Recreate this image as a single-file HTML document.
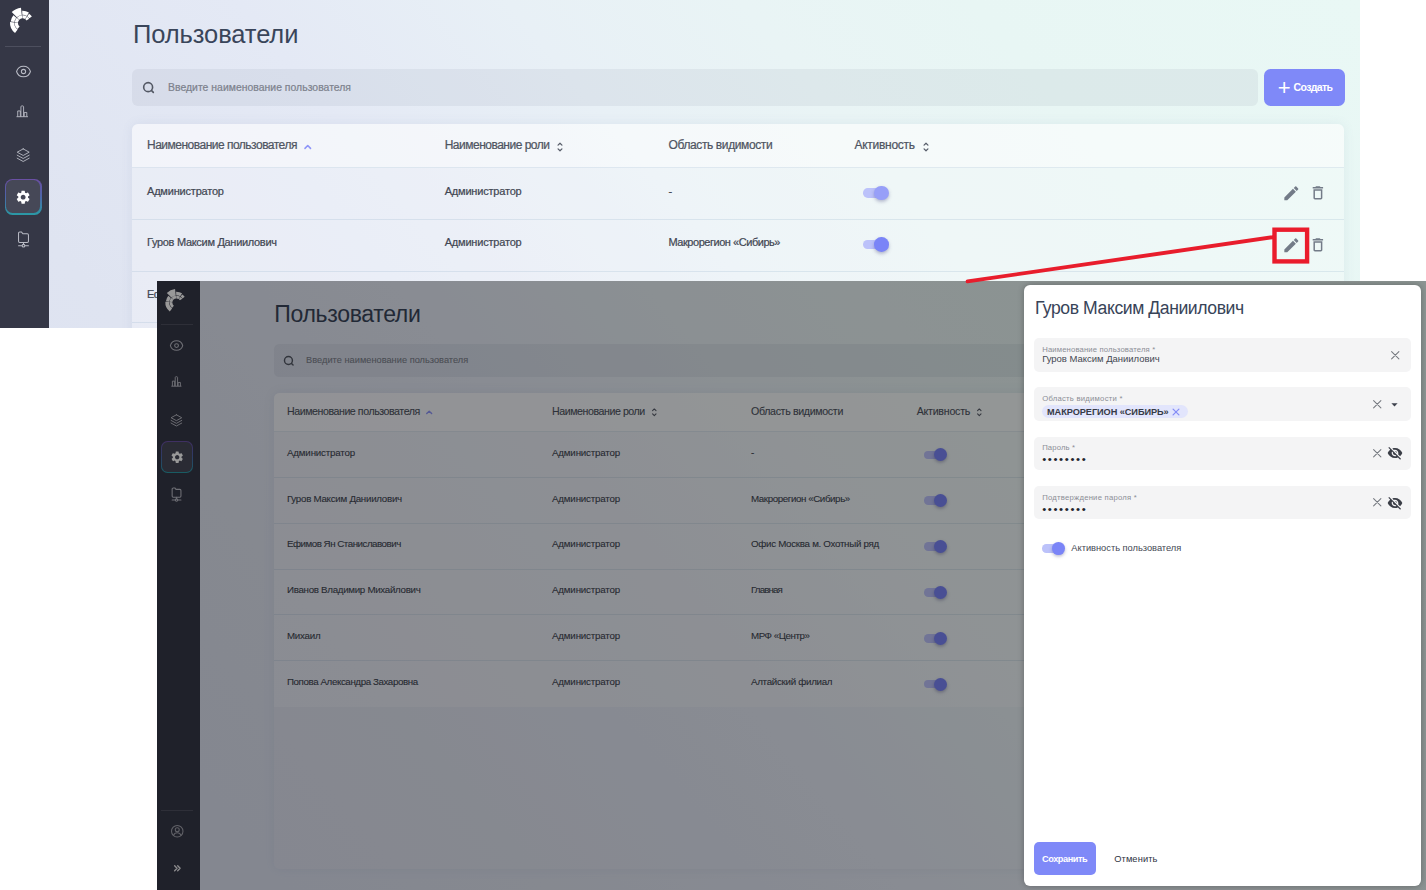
<!DOCTYPE html>
<html lang="ru"><head><meta charset="utf-8"><title>Пользователи</title>
<style>
html,body{margin:0;padding:0}
body{width:1426px;height:890px;position:relative;overflow:hidden;background:#fff;font-family:"Liberation Sans",sans-serif}
.b{position:absolute;box-sizing:border-box}
.i{position:absolute;display:block;overflow:visible}
.t{position:absolute;white-space:nowrap;display:block}
.k{-webkit-text-stroke:.22px currentColor}
.k2{-webkit-text-stroke:.1px currentColor}
.scr{position:absolute;overflow:hidden}
</style></head>
<body>
<div class="scr" style="left:0;top:0;width:1360px;height:328px;background:linear-gradient(50deg,#dce1f1 0%,#dfe4f1 22%,#e4e9f5 42%,#e8f0f6 56%,#e9f4f5 68%,#e8f6f4 80%,#e9f8f5 100%) 0 0/1360px 690px no-repeat">
<div class="b" style="left:0px;top:-3px;width:49.2px;height:334px;background:#353746;border-radius:0px;"></div>
<svg class="i" style="left:4.0px;top:2.0px" width="36.0" height="36.0" viewBox="0 0 36 36"><path fill="#ffffff" d="M11.02 31.06A12.6 12.6 0 0 1 6.03 20.12L10.37 20.42A8.25 8.25 0 0 0 13.64 27.59ZM6.69 19.54A12.0 12.0 0 0 1 9.41 13.29L12.28 15.70A8.25 8.25 0 0 0 10.41 19.99ZM7.71 10.11A15.4 15.4 0 0 1 16.99 5.68L17.75 12.94A8.1 8.1 0 0 0 12.87 15.27ZM18.17 8.71A12.3 12.3 0 0 1 24.93 10.46L22.85 13.93A8.25 8.25 0 0 0 18.31 12.76ZM25.08 11.74A11.3 11.3 0 0 1 27.86 14.52L25.36 16.27A8.25 8.25 0 0 0 23.33 14.24ZM13.55 27.01A7.85 7.85 0 0 1 10.77 20.45L13.96 20.68A4.65 4.65 0 0 0 15.61 24.56ZM10.81 20.04A7.85 7.85 0 0 1 12.77 15.75L15.14 17.89A4.65 4.65 0 0 0 13.98 20.43ZM13.12 15.52A7.75 7.75 0 0 1 17.92 13.28L18.19 16.37A4.65 4.65 0 0 0 15.31 17.71ZM18.33 13.15A7.85 7.85 0 0 1 22.76 14.34L21.06 17.06A4.65 4.65 0 0 0 18.44 16.35ZM23.10 14.57A7.85 7.85 0 0 1 25.18 16.72L22.50 18.47A4.65 4.65 0 0 0 21.27 17.19Z"/></svg>
<div class="b" style="left:5.0px;top:46.2px;width:36.0px;height:1px;background:#4d4f5e;border-radius:0px;"></div>
<svg class="i" style="left:14.50px;top:62.70px" width="17.0" height="17.0" viewBox="0 0 24 24" ><g fill="none" stroke="#b9bbc5" stroke-width="1.45"><path d="M2.200 12C3.600 7.200 7.500 4.500 12 4.500s8.400 2.700 9.800 7.500c-1.400 4.800-5.300 7.500-9.800 7.500S3.600 16.800 2.200 12z"/><circle cx="12" cy="12" r="3"/></g></svg>
<svg class="i" style="left:14.95px;top:104.25px" width="14.5" height="14.5" viewBox="0 0 24 24" ><g fill="none" stroke="#b9bbc5" stroke-width="1.5" stroke-linejoin="round"><path d="M2.500 21h19"/><path d="M4.500 21v-9.500h4.300V21M9.800 21V4.600c0-.8.600-1.400 1.400-1.400h1.600c.8 0 1.400.6 1.400 1.400V21M15.200 21v-7h4.300v7"/></g></svg>
<svg class="i" style="left:15.80px;top:147.90px" width="14.4" height="14.4" viewBox="0 0 24 24" ><g fill="none" stroke="#b9bbc5" stroke-width="1.5" stroke-linejoin="round" stroke-linecap="round"><path d="M12 1.500L2 7l10 5.500L22 7 12 1.500z"/><path d="M2 12l10 5.500L22 12"/><path d="M2 17l10 5.500L22 17"/></g></svg>
<div class="b" style="left:4.8px;top:178.8px;width:36.8px;height:35.8px;border-radius:7.5px;background:linear-gradient(180deg,#6b4fa3 0%,#4f62a8 45%,#2a9aa6 100%)"></div>
<div class="b" style="left:6.0px;top:180.0px;width:34.4px;height:33.4px;border-radius:6.5px;background:#464857"></div>
<svg class="i" style="left:14.95px;top:189.25px" width="16.3" height="16.3" viewBox="0 0 24 24" ><path fill="#ffffff" d="M19.140 12.940c.040-.300.060-.610.060-.940 0-.320-.020-.640-.070-.940l2.030-1.580a.49.490 0 0 0 .12-.61l-1.920-3.320a.488.488 0 0 0-.59-.22l-2.390.96c-.5-.38-1.030-.7-1.620-.94l-.36-2.540a.484.484 0 0 0-.48-.41h-3.840c-.24 0-.43.170-.47.410l-.36 2.540c-.59.240-1.130.570-1.620.940l-2.390-.960c-.22-.080-.47 0-.59.220L2.740 8.870c-.12.210-.08.470.12.610l2.030 1.580c-.05.300-.09.630-.09.940s.02.640.07.940l-2.030 1.580a.49.490 0 0 0-.12.610l1.920 3.320c.12.220.37.290.59.220l2.390-.96c.5.380 1.030.7 1.620.94l.36 2.540c.05.240.24.410.48.410h3.840c.24 0 .44-.17.470-.41l.36-2.540c.59-.24 1.130-.56 1.620-.94l2.390.96c.22.080.47 0 .59-.22l1.920-3.320c.12-.22.07-.47-.12-.61l-2.010-1.580zM12 15.600c-1.980 0-3.600-1.620-3.600-3.600s1.620-3.600 3.600-3.600 3.600 1.620 3.600 3.600-1.620 3.600-3.600 3.600z"/></svg>
<svg class="i" style="left:14.50px;top:231.10px" width="17.0" height="17.0" viewBox="0 0 24 24" ><g fill="none" stroke="#b9bbc5" stroke-width="1.45" stroke-linejoin="round" stroke-linecap="round"><path d="M5 14.500V3.200c0-.9.700-1.700 1.700-1.700h2.600l1.800 2.300h6.200c.9 0 1.700.8 1.700 1.700v9c0 .9-.8 1.700-1.700 1.700H6.700c-1 0-1.700-.8-1.700-1.700z"/><path d="M12 16.200v2.600M5 20.800h4.500M14.500 20.800H19"/><circle cx="12" cy="20.800" r="1.900"/></g></svg>
<div class="b" style="left:131.6px;top:69.0px;width:1126.0px;height:37.4px;background:rgba(120,130,150,.10);border-radius:6.0px;"></div>
<svg class="i" style="left:142.20px;top:81.10px" width="13.4" height="13.4" viewBox="0 0 24 24" ><g fill="none" stroke="#535864" stroke-width="2.9" stroke-linecap="round"><circle cx="11" cy="11" r="8"/><path d="M17.200 17.200L20.300 20.300"/></g></svg>
<div class="b" style="left:1263.6px;top:69.0px;width:81.3px;height:37.2px;background:#7f89f8;border-radius:6.5px;"></div>
<div class="b" style="left:131.6px;top:124.3px;width:1212.4px;height:475.7px;background:rgba(255,255,255,.03);border-radius:6.0px;box-shadow:0 0 12px rgba(90,110,150,.09);"></div>
<div class="b" style="left:131.6px;top:124.3px;width:1212.4px;height:250.0px;background:rgba(255,255,255,.27);border-radius:0px;border-radius:6.0px 6.0px 0 0;"></div>
<div class="b" style="left:131.6px;top:124.3px;width:1212.4px;height:43.6px;background:rgba(255,255,255,.42);border-radius:0px;border-radius:6.0px 6.0px 0 0;"></div>
<svg class="i" style="left:302.75px;top:141.95px" width="9.5" height="9.5" viewBox="0 0 24 24" ><path fill="none" stroke="#8e95f8" stroke-width="4" stroke-linecap="round" stroke-linejoin="round" d="M5 16l7-7 7 7"/></svg>
<svg class="i" style="left:554.40px;top:140.50px" width="12.0" height="12.0" viewBox="0 0 24 24" ><path fill="none" stroke="#555b68" stroke-width="2.4" stroke-linecap="round" stroke-linejoin="round" d="M8.100 8.400L12 4.500l3.900 3.900M8.100 15.600L12 19.500l3.900-3.900"/></svg>
<svg class="i" style="left:919.50px;top:140.50px" width="12.0" height="12.0" viewBox="0 0 24 24" ><path fill="none" stroke="#555b68" stroke-width="2.4" stroke-linecap="round" stroke-linejoin="round" d="M8.100 8.400L12 4.500l3.900 3.900M8.100 15.600L12 19.500l3.900-3.900"/></svg>
<div class="b" style="left:131.6px;top:167.4px;width:1212.4px;height:1px;background:rgba(140,175,200,.22);border-radius:0px;"></div>
<div class="b" style="left:863.1px;top:188.3px;width:23.0px;height:9.6px;border-radius:4.8px;background:#bcc2fa"></div><div class="b" style="left:874.1px;top:185.8px;width:14.6px;height:14.6px;border-radius:50%;background:#979ff8;box-shadow:0 1.8px 3.6px rgba(60,60,120,.35)"></div>
<svg class="i" style="left:1281.55px;top:184.05px" width="18.7" height="18.7" viewBox="0 0 24 24" ><path fill="#737b88" d="M3 17.25V21h3.75L17.81 9.94l-3.75-3.75L3 17.25zM20.71 7.04a.996.996 0 0 0 0-1.41l-2.34-2.34a.996.996 0 0 0-1.41 0l-1.83 1.83 3.75 3.75 1.83-1.83z"/></svg>
<svg class="i" style="left:1309.00px;top:184.40px" width="17.8" height="17.8" viewBox="0 0 24 24" ><path fill="#737b88" d="M6 19c0 1.1.9 2 2 2h8c1.1 0 2-.9 2-2V7H6v12zM8 9h8v10H8V9zm7.5-5l-1-1h-5l-1 1H5v2h14V4h-3.5z"/></svg>
<div class="b" style="left:131.6px;top:219.0px;width:1212.4px;height:1px;background:rgba(140,175,200,.22);border-radius:0px;"></div>
<div class="b" style="left:863.1px;top:239.9px;width:23.0px;height:9.6px;border-radius:4.8px;background:#bcc2fa"></div><div class="b" style="left:874.1px;top:237.4px;width:14.6px;height:14.6px;border-radius:50%;background:#7a84f7;box-shadow:0 1.8px 3.6px rgba(60,60,120,.35)"></div>
<svg class="i" style="left:1281.55px;top:235.65px" width="18.7" height="18.7" viewBox="0 0 24 24" ><path fill="#737b88" d="M3 17.25V21h3.75L17.81 9.94l-3.75-3.75L3 17.25zM20.71 7.04a.996.996 0 0 0 0-1.41l-2.34-2.34a.996.996 0 0 0-1.41 0l-1.83 1.83 3.75 3.75 1.83-1.83z"/></svg>
<svg class="i" style="left:1309.00px;top:236.00px" width="17.8" height="17.8" viewBox="0 0 24 24" ><path fill="#737b88" d="M6 19c0 1.1.9 2 2 2h8c1.1 0 2-.9 2-2V7H6v12zM8 9h8v10H8V9zm7.5-5l-1-1h-5l-1 1H5v2h14V4h-3.5z"/></svg>
<div class="b" style="left:131.6px;top:270.6px;width:1212.4px;height:1px;background:rgba(140,175,200,.22);border-radius:0px;"></div>
<div class="b" style="left:863.1px;top:291.5px;width:23.0px;height:9.6px;border-radius:4.8px;background:#bcc2fa"></div><div class="b" style="left:874.1px;top:289.0px;width:14.6px;height:14.6px;border-radius:50%;background:#7a84f7;box-shadow:0 1.8px 3.6px rgba(60,60,120,.35)"></div>
<svg class="i" style="left:1281.55px;top:287.25px" width="18.7" height="18.7" viewBox="0 0 24 24" ><path fill="#737b88" d="M3 17.25V21h3.75L17.81 9.94l-3.75-3.75L3 17.25zM20.71 7.04a.996.996 0 0 0 0-1.41l-2.34-2.34a.996.996 0 0 0-1.41 0l-1.83 1.83 3.75 3.75 1.83-1.83z"/></svg>
<svg class="i" style="left:1309.00px;top:287.60px" width="17.8" height="17.8" viewBox="0 0 24 24" ><path fill="#737b88" d="M6 19c0 1.1.9 2 2 2h8c1.1 0 2-.9 2-2V7H6v12zM8 9h8v10H8V9zm7.5-5l-1-1h-5l-1 1H5v2h14V4h-3.5z"/></svg>
<div class="b" style="left:131.6px;top:322.2px;width:1212.4px;height:1px;background:rgba(140,175,200,.22);border-radius:0px;"></div>
<div class="b" style="left:863.1px;top:343.1px;width:23.0px;height:9.6px;border-radius:4.8px;background:#bcc2fa"></div><div class="b" style="left:874.1px;top:340.6px;width:14.6px;height:14.6px;border-radius:50%;background:#7a84f7;box-shadow:0 1.8px 3.6px rgba(60,60,120,.35)"></div>
<svg class="i" style="left:1281.55px;top:338.85px" width="18.7" height="18.7" viewBox="0 0 24 24" ><path fill="#737b88" d="M3 17.25V21h3.75L17.81 9.94l-3.75-3.75L3 17.25zM20.71 7.04a.996.996 0 0 0 0-1.41l-2.34-2.34a.996.996 0 0 0-1.41 0l-1.83 1.83 3.75 3.75 1.83-1.83z"/></svg>
<svg class="i" style="left:1309.00px;top:339.20px" width="17.8" height="17.8" viewBox="0 0 24 24" ><path fill="#737b88" d="M6 19c0 1.1.9 2 2 2h8c1.1 0 2-.9 2-2V7H6v12zM8 9h8v10H8V9zm7.5-5l-1-1h-5l-1 1H5v2h14V4h-3.5z"/></svg>
<span class="t" style="left:133.0px;top:19.4px;font-size:25.5px;line-height:31px;color:#39455a;letter-spacing:-0.094px;">Пользователи</span>
<span class="t k" style="left:168.0px;top:81.1px;font-size:10.4px;line-height:13px;color:#7d828d;letter-spacing:0.031px;">Введите наименование пользователя</span>
<span class="t" style="left:1277.7px;top:73.6px;font-size:22.0px;line-height:27px;color:#ffffff;">+</span>
<span class="t" style="left:1293.5px;top:81.1px;font-size:10.5px;line-height:13px;color:#ffffff;font-weight:700;letter-spacing:-0.615px;">Создать</span>
<span class="t k" style="left:147.0px;top:138.2px;font-size:12.0px;line-height:15px;color:#4e5461;letter-spacing:-0.505px;">Наименование пользователя</span>
<span class="t k" style="left:444.7px;top:138.2px;font-size:12.0px;line-height:15px;color:#4e5461;letter-spacing:-0.501px;">Наименование роли</span>
<span class="t k" style="left:668.5px;top:138.2px;font-size:12.0px;line-height:15px;color:#4e5461;letter-spacing:-0.384px;">Область видимости</span>
<span class="t k" style="left:854.5px;top:138.2px;font-size:12.0px;line-height:15px;color:#4e5461;letter-spacing:-0.280px;">Активность</span>
<span class="t k" style="left:147.0px;top:183.6px;font-size:11.0px;line-height:14px;color:#424753;letter-spacing:-0.198px;">Администратор</span>
<span class="t k" style="left:444.7px;top:183.6px;font-size:11.0px;line-height:14px;color:#424753;letter-spacing:-0.198px;">Администратор</span>
<span class="t k" style="left:668.5px;top:183.6px;font-size:11.0px;line-height:14px;color:#424753;">-</span>
<span class="t k" style="left:147.0px;top:235.2px;font-size:11.0px;line-height:14px;color:#424753;letter-spacing:-0.303px;">Гуров Максим Даниилович</span>
<span class="t k" style="left:444.7px;top:235.2px;font-size:11.0px;line-height:14px;color:#424753;letter-spacing:-0.198px;">Администратор</span>
<span class="t k" style="left:668.5px;top:235.2px;font-size:11.0px;line-height:14px;color:#424753;letter-spacing:-0.459px;">Макрорегион &laquo;Сибирь&raquo;</span>
<span class="t k" style="left:147.0px;top:286.8px;font-size:11.0px;line-height:14px;color:#424753;letter-spacing:-0.545px;">Ефимов Ян Станиславович</span>
<span class="t k" style="left:444.7px;top:286.8px;font-size:11.0px;line-height:14px;color:#424753;letter-spacing:-0.198px;">Администратор</span>
<span class="t k" style="left:668.5px;top:286.8px;font-size:11.0px;line-height:14px;color:#424753;letter-spacing:-0.327px;">Офис Москва м. Охотный ряд</span>
<span class="t k" style="left:147.0px;top:338.4px;font-size:11.0px;line-height:14px;color:#424753;letter-spacing:-0.339px;">Иванов Владимир Михайлович</span>
<span class="t k" style="left:444.7px;top:338.4px;font-size:11.0px;line-height:14px;color:#424753;letter-spacing:-0.198px;">Администратор</span>
<span class="t k" style="left:668.5px;top:338.4px;font-size:11.0px;line-height:14px;color:#424753;letter-spacing:-0.979px;">Главная</span>
</div>
<div class="scr" style="left:156.5px;top:281.2px;width:1269.5px;height:608.8px;background:linear-gradient(50deg,#dce1f1 0%,#dfe4f1 22%,#e4e9f5 42%,#e8f0f6 56%,#e9f4f5 68%,#e8f6f4 80%,#e9f8f5 100%)">
<div class="b" style="left:0;top:1.5px;width:100%;height:100%">
<div class="b" style="left:0px;top:-3px;width:43.6px;height:614px;background:#353746;border-radius:0px;"></div>
<svg class="i" style="left:3.5px;top:1.8px" width="31.9" height="31.9" viewBox="0 0 36 36"><path fill="#ffffff" d="M11.02 31.06A12.6 12.6 0 0 1 6.03 20.12L10.37 20.42A8.25 8.25 0 0 0 13.64 27.59ZM6.69 19.54A12.0 12.0 0 0 1 9.41 13.29L12.28 15.70A8.25 8.25 0 0 0 10.41 19.99ZM7.71 10.11A15.4 15.4 0 0 1 16.99 5.68L17.75 12.94A8.1 8.1 0 0 0 12.87 15.27ZM18.17 8.71A12.3 12.3 0 0 1 24.93 10.46L22.85 13.93A8.25 8.25 0 0 0 18.31 12.76ZM25.08 11.74A11.3 11.3 0 0 1 27.86 14.52L25.36 16.27A8.25 8.25 0 0 0 23.33 14.24ZM13.55 27.01A7.85 7.85 0 0 1 10.77 20.45L13.96 20.68A4.65 4.65 0 0 0 15.61 24.56ZM10.81 20.04A7.85 7.85 0 0 1 12.77 15.75L15.14 17.89A4.65 4.65 0 0 0 13.98 20.43ZM13.12 15.52A7.75 7.75 0 0 1 17.92 13.28L18.19 16.37A4.65 4.65 0 0 0 15.31 17.71ZM18.33 13.15A7.85 7.85 0 0 1 22.76 14.34L21.06 17.06A4.65 4.65 0 0 0 18.44 16.35ZM23.10 14.57A7.85 7.85 0 0 1 25.18 16.72L22.50 18.47A4.65 4.65 0 0 0 21.27 17.19Z"/></svg>
<div class="b" style="left:4.4px;top:40.9px;width:31.9px;height:1px;background:#4d4f5e;border-radius:0px;"></div>
<svg class="i" style="left:12.83px;top:55.53px" width="15.1" height="15.1" viewBox="0 0 24 24" ><g fill="none" stroke="#b9bbc5" stroke-width="1.6970872230702376"><path d="M2.200 12C3.600 7.200 7.500 4.500 12 4.500s8.400 2.700 9.800 7.500c-1.400 4.800-5.300 7.500-9.800 7.500S3.600 16.800 2.200 12z"/><circle cx="12" cy="12" r="3"/></g></svg>
<svg class="i" style="left:13.27px;top:92.39px" width="12.8" height="12.8" viewBox="0 0 24 24" ><g fill="none" stroke="#b9bbc5" stroke-width="1.755607472141625" stroke-linejoin="round"><path d="M2.500 21h19"/><path d="M4.500 21v-9.500h4.300V21M9.800 21V4.600c0-.8.600-1.400 1.400-1.400h1.600c.8 0 1.400.6 1.400 1.400V21M15.200 21v-7h4.300v7"/></g></svg>
<svg class="i" style="left:13.98px;top:131.02px" width="12.8" height="12.8" viewBox="0 0 24 24" ><g fill="none" stroke="#b9bbc5" stroke-width="1.755607472141625" stroke-linejoin="round" stroke-linecap="round"><path d="M12 1.500L2 7l10 5.500L22 7 12 1.500z"/><path d="M2 12l10 5.500L22 12"/><path d="M2 17l10 5.500L22 17"/></g></svg>
<div class="b" style="left:4.3px;top:158.4px;width:32.6px;height:31.7px;border-radius:6.6px;background:linear-gradient(180deg,#6b4fa3 0%,#4f62a8 45%,#2a9aa6 100%)"></div>
<div class="b" style="left:5.5px;top:159.6px;width:30.2px;height:29.3px;border-radius:5.8px;background:#464857"></div>
<svg class="i" style="left:13.27px;top:167.70px" width="14.4" height="14.4" viewBox="0 0 24 24" ><path fill="#ffffff" d="M19.140 12.940c.040-.300.060-.610.060-.940 0-.320-.020-.640-.070-.940l2.030-1.580a.49.490 0 0 0 .12-.61l-1.920-3.320a.488.488 0 0 0-.59-.22l-2.390.96c-.5-.38-1.030-.7-1.620-.94l-.36-2.540a.484.484 0 0 0-.48-.41h-3.840c-.24 0-.43.170-.47.410l-.36 2.540c-.59.240-1.130.570-1.620.940l-2.390-.960c-.22-.080-.47 0-.59.220L2.740 8.870c-.12.210-.08.470.12.610l2.030 1.580c-.05.300-.09.630-.09.940s.02.640.07.940l-2.030 1.580a.49.490 0 0 0-.12.610l1.920 3.320c.12.220.37.290.59.220l2.390-.96c.5.380 1.030.7 1.620.94l.36 2.540c.05.240.24.410.48.410h3.840c.24 0 .44-.17.470-.41l.36-2.540c.59-.24 1.130-.56 1.620-.94l2.390.96c.22.080.47 0 .59-.22l1.920-3.320c.12-.22.07-.47-.12-.61l-2.010-1.580zM12 15.600c-1.980 0-3.600-1.620-3.600-3.600s1.620-3.600 3.600-3.600 3.600 1.620 3.600 3.600-1.620 3.600-3.600 3.600z"/></svg>
<svg class="i" style="left:12.83px;top:204.74px" width="15.1" height="15.1" viewBox="0 0 24 24" ><g fill="none" stroke="#b9bbc5" stroke-width="1.6970872230702376" stroke-linejoin="round" stroke-linecap="round"><path d="M5 14.500V3.200c0-.9.700-1.700 1.700-1.700h2.600l1.800 2.300h6.200c.9 0 1.700.8 1.700 1.700v9c0 .9-.8 1.700-1.700 1.700H6.700c-1 0-1.700-.8-1.700-1.700z"/><path d="M12 16.200v2.600M5 20.800h4.500M14.500 20.800H19"/><circle cx="12" cy="20.800" r="1.900"/></g></svg>
<div class="b" style="left:4.4px;top:527px;width:31.9px;height:1px;background:#4d4f5e;border-radius:0px;"></div>
<svg class="i" style="left:13.15px;top:541.35px" width="14.5" height="14.5" viewBox="0 0 24 24" ><g fill="none" stroke="#a2a4ae" stroke-width="1.7"><circle cx="12" cy="12" r="9.500"/><circle cx="12" cy="9.500" r="3.300"/><path d="M5.800 19c1-3 3.300-4.500 6.200-4.500s5.200 1.500 6.200 4.500"/></g></svg>
<svg class="i" style="left:15.35px;top:580.25px" width="10.5" height="10.5" viewBox="0 0 24 24" ><path fill="none" stroke="#e6e6ea" stroke-width="3.2" stroke-linecap="round" stroke-linejoin="round" d="M6 6.500L11.500 12 6 17.500M13 6.500L18.500 12 13 17.500"/></svg>
<div class="b" style="left:117.4px;top:61.1px;width:997.6px;height:33.1px;background:rgba(120,130,150,.10);border-radius:5.3px;"></div>
<svg class="i" style="left:126.78px;top:71.84px" width="11.9" height="11.9" viewBox="0 0 24 24" ><g fill="none" stroke="#535864" stroke-width="2.9" stroke-linecap="round"><circle cx="11" cy="11" r="8"/><path d="M17.200 17.200L20.300 20.300"/></g></svg>
<div class="b" style="left:117.4px;top:110.1px;width:1100px;height:476.2px;background:rgba(255,255,255,.03);border-radius:5.3px;box-shadow:0 0 12px rgba(90,110,150,.09);"></div>
<div class="b" style="left:117.4px;top:110.1px;width:1100px;height:313.9px;background:rgba(255,255,255,.27);border-radius:0px;border-radius:5.3px 5.3px 0 0;"></div>
<div class="b" style="left:117.4px;top:110.1px;width:1100px;height:38.8px;background:rgba(255,255,255,.42);border-radius:0px;border-radius:5.3px 5.3px 0 0;"></div>
<svg class="i" style="left:268.50px;top:125.57px" width="8.4" height="8.4" viewBox="0 0 24 24" ><path fill="none" stroke="#8e95f8" stroke-width="4" stroke-linecap="round" stroke-linejoin="round" d="M5 16l7-7 7 7"/></svg>
<svg class="i" style="left:492.71px;top:124.29px" width="10.6" height="10.6" viewBox="0 0 24 24" ><path fill="none" stroke="#555b68" stroke-width="2.4" stroke-linecap="round" stroke-linejoin="round" d="M8.100 8.400L12 4.500l3.900 3.900M8.100 15.600L12 19.500l3.900-3.900"/></svg>
<svg class="i" style="left:817.81px;top:124.29px" width="10.6" height="10.6" viewBox="0 0 24 24" ><path fill="none" stroke="#555b68" stroke-width="2.4" stroke-linecap="round" stroke-linejoin="round" d="M8.100 8.400L12 4.500l3.900 3.900M8.100 15.600L12 19.500l3.900-3.900"/></svg>
<div class="b" style="left:117.4px;top:148.4px;width:1100px;height:1px;background:rgba(140,175,200,.22);border-radius:0px;"></div>
<div class="b" style="left:767.8px;top:168.0px;width:20.4px;height:8.5px;border-radius:4.25px;background:#bcc2fa"></div><div class="b" style="left:777.6px;top:165.8px;width:12.935599999999999px;height:12.935599999999999px;border-radius:50%;background:#7a84f7;box-shadow:0 1.6px 3.2px rgba(60,60,120,.35)"></div>
<div class="b" style="left:117.4px;top:194.2px;width:1100px;height:1px;background:rgba(140,175,200,.22);border-radius:0px;"></div>
<div class="b" style="left:767.8px;top:213.8px;width:20.4px;height:8.5px;border-radius:4.25px;background:#bcc2fa"></div><div class="b" style="left:777.6px;top:211.6px;width:12.935599999999999px;height:12.935599999999999px;border-radius:50%;background:#7a84f7;box-shadow:0 1.6px 3.2px rgba(60,60,120,.35)"></div>
<div class="b" style="left:117.4px;top:240.1px;width:1100px;height:1px;background:rgba(140,175,200,.22);border-radius:0px;"></div>
<div class="b" style="left:767.8px;top:259.7px;width:20.4px;height:8.5px;border-radius:4.25px;background:#bcc2fa"></div><div class="b" style="left:777.6px;top:257.5px;width:12.935599999999999px;height:12.935599999999999px;border-radius:50%;background:#7a84f7;box-shadow:0 1.6px 3.2px rgba(60,60,120,.35)"></div>
<div class="b" style="left:117.4px;top:286.0px;width:1100px;height:1px;background:rgba(140,175,200,.22);border-radius:0px;"></div>
<div class="b" style="left:767.8px;top:305.6px;width:20.4px;height:8.5px;border-radius:4.25px;background:#bcc2fa"></div><div class="b" style="left:777.6px;top:303.4px;width:12.935599999999999px;height:12.935599999999999px;border-radius:50%;background:#7a84f7;box-shadow:0 1.6px 3.2px rgba(60,60,120,.35)"></div>
<div class="b" style="left:117.4px;top:331.8px;width:1100px;height:1px;background:rgba(140,175,200,.22);border-radius:0px;"></div>
<div class="b" style="left:767.8px;top:351.4px;width:20.4px;height:8.5px;border-radius:4.25px;background:#bcc2fa"></div><div class="b" style="left:777.6px;top:349.2px;width:12.935599999999999px;height:12.935599999999999px;border-radius:50%;background:#7a84f7;box-shadow:0 1.6px 3.2px rgba(60,60,120,.35)"></div>
<div class="b" style="left:117.4px;top:377.7px;width:1100px;height:1px;background:rgba(140,175,200,.22);border-radius:0px;"></div>
<div class="b" style="left:767.8px;top:397.3px;width:20.4px;height:8.5px;border-radius:4.25px;background:#bcc2fa"></div><div class="b" style="left:777.6px;top:395.1px;width:12.935599999999999px;height:12.935599999999999px;border-radius:50%;background:#7a84f7;box-shadow:0 1.6px 3.2px rgba(60,60,120,.35)"></div>
<span class="t" style="left:117.8px;top:17.0px;font-size:23.04px;line-height:28px;color:#39455a;letter-spacing:-0.344px;">Пользователи</span>
<span class="t k2" style="left:149.6px;top:71.6px;font-size:9.21px;line-height:12px;color:#7d828d;letter-spacing:0.029px;">Введите наименование пользователя</span>
<span class="t k2" style="left:130.5px;top:122.4px;font-size:10.63px;line-height:13px;color:#4e5461;letter-spacing:-0.443px;">Наименование пользователя</span>
<span class="t k2" style="left:395.5px;top:122.4px;font-size:10.63px;line-height:13px;color:#4e5461;letter-spacing:-0.440px;">Наименование роли</span>
<span class="t k2" style="left:594.5px;top:122.4px;font-size:10.63px;line-height:13px;color:#4e5461;letter-spacing:-0.336px;">Область видимости</span>
<span class="t k2" style="left:760.2px;top:122.4px;font-size:10.63px;line-height:13px;color:#4e5461;letter-spacing:-0.244px;">Активность</span>
<span class="t k2" style="left:130.5px;top:164.0px;font-size:9.75px;line-height:12px;color:#424753;letter-spacing:-0.178px;">Администратор</span>
<span class="t k2" style="left:395.5px;top:164.0px;font-size:9.75px;line-height:12px;color:#424753;letter-spacing:-0.178px;">Администратор</span>
<span class="t k2" style="left:594.5px;top:164.0px;font-size:9.75px;line-height:12px;color:#424753;">-</span>
<span class="t k2" style="left:130.5px;top:209.9px;font-size:9.75px;line-height:12px;color:#424753;letter-spacing:-0.270px;">Гуров Максим Даниилович</span>
<span class="t k2" style="left:395.5px;top:209.9px;font-size:9.75px;line-height:12px;color:#424753;letter-spacing:-0.178px;">Администратор</span>
<span class="t k2" style="left:594.5px;top:209.9px;font-size:9.75px;line-height:12px;color:#424753;letter-spacing:-0.409px;">Макрорегион &laquo;Сибирь&raquo;</span>
<span class="t k2" style="left:130.5px;top:255.7px;font-size:9.75px;line-height:12px;color:#424753;letter-spacing:-0.485px;">Ефимов Ян Станиславович</span>
<span class="t k2" style="left:395.5px;top:255.7px;font-size:9.75px;line-height:12px;color:#424753;letter-spacing:-0.178px;">Администратор</span>
<span class="t k2" style="left:594.5px;top:255.7px;font-size:9.75px;line-height:12px;color:#424753;letter-spacing:-0.292px;">Офис Москва м. Охотный ряд</span>
<span class="t k2" style="left:130.5px;top:301.6px;font-size:9.75px;line-height:12px;color:#424753;letter-spacing:-0.303px;">Иванов Владимир Михайлович</span>
<span class="t k2" style="left:395.5px;top:301.6px;font-size:9.75px;line-height:12px;color:#424753;letter-spacing:-0.178px;">Администратор</span>
<span class="t k2" style="left:594.5px;top:301.6px;font-size:9.75px;line-height:12px;color:#424753;letter-spacing:-0.871px;">Главная</span>
<span class="t k2" style="left:130.5px;top:347.5px;font-size:9.75px;line-height:12px;color:#424753;letter-spacing:-0.248px;">Михаил</span>
<span class="t k2" style="left:395.5px;top:347.5px;font-size:9.75px;line-height:12px;color:#424753;letter-spacing:-0.178px;">Администратор</span>
<span class="t k2" style="left:594.5px;top:347.5px;font-size:9.75px;line-height:12px;color:#424753;letter-spacing:-0.447px;">МРФ &laquo;Центр&raquo;</span>
<span class="t k2" style="left:130.5px;top:393.3px;font-size:9.75px;line-height:12px;color:#424753;letter-spacing:-0.403px;">Попова Александра Захаровна</span>
<span class="t k2" style="left:395.5px;top:393.3px;font-size:9.75px;line-height:12px;color:#424753;letter-spacing:-0.178px;">Администратор</span>
<span class="t k2" style="left:594.5px;top:393.3px;font-size:9.75px;line-height:12px;color:#424753;letter-spacing:-0.291px;">Алтайский филиал</span>
</div>
<div class="b" style="left:0;top:0;width:100%;height:100%;background:rgba(0,0,0,.4)"></div>
<div class="b" style="left:867.1px;top:3.4px;width:397.6px;height:601.6px;background:#fff;border-radius:6px;box-shadow:0 0 6px rgba(0,0,0,.28)"></div>
<div class="b" style="left:877.5px;top:57.2px;width:377px;height:33.2px;background:#f4f4f5;border-radius:5px;"></div>
<div class="b" style="left:877.5px;top:106.2px;width:377px;height:33.2px;background:#f4f4f5;border-radius:5px;"></div>
<div class="b" style="left:877.5px;top:155.6px;width:377px;height:33.2px;background:#f4f4f5;border-radius:5px;"></div>
<div class="b" style="left:877.5px;top:204.8px;width:377px;height:33.2px;background:#f4f4f5;border-radius:5px;"></div>
<svg class="i" style="left:1232.15px;top:67.35px" width="12.5" height="12.5" viewBox="0 0 24 24" ><path fill="none" stroke="#74787f" stroke-width="2.0" stroke-linecap="round" d="M5 5l14 14M19 5L5 19"/></svg>
<div class="b" style="left:885.4px;top:124.0px;width:146.6px;height:13px;background:#e2e5fc;border-radius:6.5px;"></div>
<svg class="i" style="left:1014.40px;top:125.60px" width="10" height="10" viewBox="0 0 24 24" ><path fill="none" stroke="#858df6" stroke-width="3" stroke-linecap="round" d="M5 5l14 14M19 5L5 19"/></svg>
<svg class="i" style="left:1214.65px;top:116.75px" width="12.5" height="12.5" viewBox="0 0 24 24" ><path fill="none" stroke="#74787f" stroke-width="2.0" stroke-linecap="round" d="M5 5l14 14M19 5L5 19"/></svg>
<svg class="i" style="left:1230.90px;top:116.10px" width="15" height="15" viewBox="0 0 24 24" ><path fill="#3d414c" d="M7 10l5 5 5-5z"/></svg>
<svg class="i" style="left:1214.65px;top:166.05px" width="12.5" height="12.5" viewBox="0 0 24 24" ><path fill="none" stroke="#74787f" stroke-width="2.0" stroke-linecap="round" d="M5 5l14 14M19 5L5 19"/></svg>
<svg class="i" style="left:1230.40px;top:164.30px" width="16" height="16" viewBox="0 0 24 24" ><path fill="#3a3d46" d="M12 7c2.760 0 5 2.240 5 5 0 .650-.130 1.260-.360 1.830l2.920 2.920c1.510-1.260 2.700-2.890 3.430-4.750-1.730-4.390-6-7.500-11-7.500-1.400 0-2.740.250-3.980.700l2.160 2.160C10.740 7.130 11.350 7 12 7zM2 4.270l2.280 2.280.46.460A11.804 11.804 0 0 0 1 12c1.730 4.390 6 7.500 11 7.500 1.550 0 3.030-.300 4.380-.840l.42.420L19.730 22 21 20.730 3.270 3 2 4.270zM7.530 9.800l1.550 1.550c-.05.210-.08.430-.08.650 0 1.660 1.340 3 3 3 .22 0 .44-.03.65-.08l1.550 1.550c-.67.330-1.410.530-2.200.530-2.760 0-5-2.240-5-5 0-.790.200-1.530.530-2.200zm4.310-.780l3.150 3.150.02-.16c0-1.660-1.340-3-3-3l-.17.010z"/></svg>
<svg class="i" style="left:1214.65px;top:215.25px" width="12.5" height="12.5" viewBox="0 0 24 24" ><path fill="none" stroke="#74787f" stroke-width="2.0" stroke-linecap="round" d="M5 5l14 14M19 5L5 19"/></svg>
<svg class="i" style="left:1230.40px;top:213.50px" width="16" height="16" viewBox="0 0 24 24" ><path fill="#3a3d46" d="M12 7c2.760 0 5 2.240 5 5 0 .650-.130 1.260-.360 1.830l2.920 2.920c1.510-1.260 2.700-2.890 3.430-4.750-1.730-4.390-6-7.500-11-7.500-1.400 0-2.740.250-3.980.700l2.160 2.160C10.740 7.130 11.350 7 12 7zM2 4.270l2.280 2.280.46.460A11.804 11.804 0 0 0 1 12c1.730 4.390 6 7.500 11 7.500 1.550 0 3.030-.300 4.380-.840l.42.420L19.730 22 21 20.730 3.270 3 2 4.270zM7.530 9.800l1.550 1.550c-.05.210-.08.430-.08.650 0 1.660 1.340 3 3 3 .22 0 .44-.03.65-.08l1.550 1.550c-.67.330-1.410.530-2.200.530-2.760 0-5-2.240-5-5 0-.790.200-1.530.530-2.200zm4.310-.780l3.150 3.150.02-.16c0-1.660-1.340-3-3-3l-.17.010z"/></svg>
<div class="b" style="left:885.3px;top:262.9px;width:21px;height:8.6px;border-radius:4.3px;background:#bcc2fa"></div><div class="b" style="left:895.7px;top:260.8px;width:12.8px;height:12.8px;border-radius:50%;background:#7a84f7;box-shadow:0 1.6px 3.2px rgba(60,60,120,.35)"></div>
<div class="b" style="left:877.5px;top:560.8px;width:62px;height:33.5px;background:#7f89f8;border-radius:5px;"></div>
<span class="t" style="left:878.4px;top:15.5px;font-size:17.6px;line-height:22px;color:#384458;letter-spacing:-0.421px;">Гуров Максим Даниилович</span>
<span class="t" style="left:885.7px;top:63.7px;font-size:7.7px;line-height:10px;color:#8b8e96;letter-spacing:0.145px;">Наименование пользователя *</span>
<span class="t" style="left:885.7px;top:72.2px;font-size:9.5px;line-height:12px;color:#444853;letter-spacing:-0.019px;">Гуров Максим Даниилович</span>
<span class="t" style="left:885.7px;top:112.7px;font-size:7.7px;line-height:10px;color:#8b8e96;letter-spacing:0.244px;">Область видимости *</span>
<span class="t" style="left:890.5px;top:124.6px;font-size:9.2px;line-height:12px;color:#363a46;font-weight:700;letter-spacing:-0.061px;">МАКРОРЕГИОН &laquo;СИБИРЬ&raquo;</span>
<span class="t" style="left:885.7px;top:161.7px;font-size:7.7px;line-height:10px;color:#8b8e96;letter-spacing:0.141px;">Пароль *</span>
<span class="t" style="left:885.7px;top:171.2px;font-size:11.5px;line-height:14px;color:#23262e;letter-spacing:1.612px;">&bull;&bull;&bull;&bull;&bull;&bull;&bull;&bull;</span>
<span class="t" style="left:885.7px;top:211.7px;font-size:7.7px;line-height:10px;color:#8b8e96;letter-spacing:0.236px;">Подтверждение пароля *</span>
<span class="t" style="left:885.7px;top:220.5px;font-size:11.5px;line-height:14px;color:#23262e;letter-spacing:1.612px;">&bull;&bull;&bull;&bull;&bull;&bull;&bull;&bull;</span>
<span class="t" style="left:914.8px;top:260.6px;font-size:9.3px;line-height:12px;color:#444853;letter-spacing:-0.013px;">Активность пользователя</span>
<span class="t" style="left:885.5px;top:571.4px;font-size:9.2px;line-height:12px;color:#ffffff;font-weight:700;letter-spacing:-0.438px;">Сохранить</span>
<span class="t" style="left:957.7px;top:571.4px;font-size:9.3px;line-height:12px;color:#2f3442;letter-spacing:0.102px;">Отменить</span>
</div>
<svg class="i" style="left:0;top:0" width="1426" height="890" viewBox="0 0 1426 890">
<line x1="967.6" y1="281.4" x2="1273" y2="237.2" stroke="#e81d2c" stroke-width="3.9" stroke-linecap="round"/>
<rect x="1274.5" y="229.7" width="32.6" height="31.7" fill="none" stroke="#ea1c2c" stroke-width="4.4"/>
</svg>
</body></html>
